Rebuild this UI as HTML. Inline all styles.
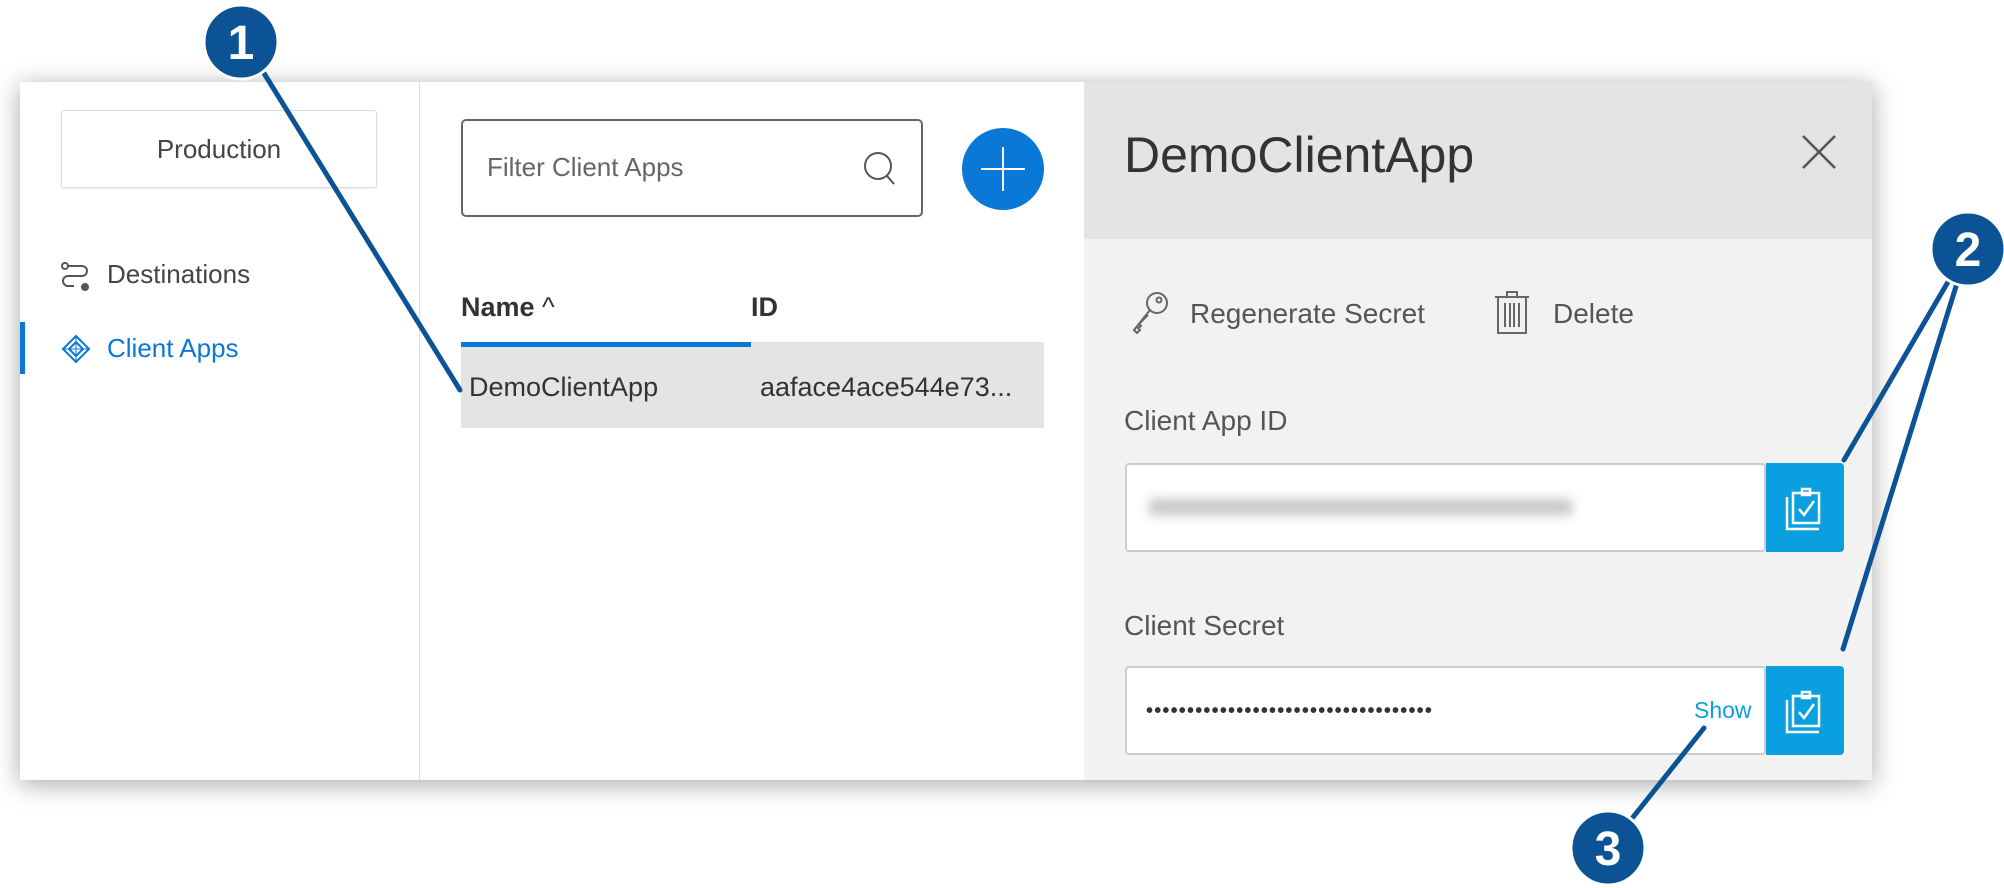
<!DOCTYPE html>
<html><head><meta charset="utf-8"><style>
*{margin:0;padding:0;box-sizing:border-box}
body{width:2004px;height:888px;background:#fff;position:relative;overflow:hidden;font-family:"Liberation Sans",sans-serif;color:#444}
.a{position:absolute}
.panel{left:20px;top:82px;width:1852px;height:698px;background:#fff;box-shadow:0 4px 24px rgba(0,0,0,.35)}
.t{position:absolute;white-space:nowrap}
</style></head><body>
<div class="a panel"></div>
<div class="a" style="left:419px;top:82px;width:1px;height:698px;background:#ddd"></div>
<div class="a" style="left:1084px;top:82px;width:788px;height:698px;background:#f2f2f2"></div>
<div class="a" style="left:1084px;top:82px;width:788px;height:157px;background:#e4e4e4"></div>

<!-- sidebar -->
<div class="a" style="left:61px;top:110px;width:316px;height:78px;border:1px solid #ddd;border-radius:3px;background:#fff;box-shadow:0 1px 2px rgba(0,0,0,.08)"></div>
<div class="t" style="left:61px;width:316px;text-align:center;top:134px;font-size:26px;color:#444">Production</div>
<svg class="a" style="left:60px;top:262px" width="32" height="30" viewBox="0 0 32 30" fill="none" stroke="#555" stroke-width="2"><circle cx="5" cy="4" r="3"/><path d="M8 4h14a5 5 0 0 1 0 10H8a5 5 0 0 0 0 10h6"/><circle cx="25" cy="25" r="3" fill="#555"/></svg>
<div class="t" style="left:107px;top:259px;font-size:26px;color:#444">Destinations</div>
<div class="a" style="left:20px;top:322px;width:5px;height:52px;background:#0a78d7"></div>
<svg class="a" style="left:61px;top:334px" width="30" height="30" viewBox="0 0 30 30" fill="none" stroke="#0a78d7" stroke-width="2"><path d="M15 2L28 15L15 28L2 15Z"/><path d="M8 15L15 8L22 15L15 22Z"/><path d="M2 15h26M15 2v26" stroke-width="1"/></svg>
<div class="t" style="left:107px;top:333px;font-size:26px;color:#0a78d7">Client Apps</div>

<!-- middle -->
<div class="a" style="left:461px;top:119px;width:462px;height:98px;border:2px solid #666;border-radius:5px;background:#fff"></div>
<div class="t" style="left:487px;top:152px;font-size:26px;color:#666">Filter Client Apps</div>
<svg class="a" style="left:862px;top:150px" width="36" height="38" viewBox="0 0 36 38" fill="none" stroke="#555" stroke-width="2"><circle cx="16" cy="16" r="13"/><path d="M25 26l7 8"/></svg>
<div class="a" style="left:962px;top:128px;width:82px;height:82px;border-radius:50%;background:#0a78d7"></div>
<div class="a" style="left:981px;top:168px;width:44px;height:2px;background:#fff"></div>
<div class="a" style="left:1002px;top:147px;width:2px;height:44px;background:#fff"></div>
<div class="t" style="left:461px;top:292px;font-size:27px;font-weight:bold;color:#333">Name <span style="font-weight:normal">^</span></div>
<div class="t" style="left:751px;top:292px;font-size:27px;font-weight:bold;color:#333">ID</div>
<div class="a" style="left:461px;top:342px;width:583px;height:86px;background:#e4e4e4"></div>
<div class="a" style="left:461px;top:342px;width:290px;height:5px;background:#0a78d7"></div>
<div class="t" style="left:469px;top:372px;font-size:27px;color:#333">DemoClientApp</div>
<div class="t" style="left:760px;top:372px;font-size:27px;color:#333">aaface4ace544e73...</div>

<!-- right -->
<div class="t" style="left:1124px;top:126px;font-size:50px;color:#333">DemoClientApp</div>
<svg class="a" style="left:1801px;top:134px" width="36" height="36" viewBox="0 0 36 36" stroke="#555" stroke-width="2.5"><path d="M2 2L34 34M34 2L2 34"/></svg>
<svg class="a" style="left:1130px;top:290px" width="40" height="46" viewBox="0 0 40 46" fill="none" stroke="#666" stroke-width="2"><circle cx="27" cy="13" r="10"/><circle cx="29" cy="10" r="2.5"/><path d="M20 20L4 40l3 3 3-3-2-2 3-2-2-2 3-3 6-6"/></svg>
<div class="t" style="left:1190px;top:298px;font-size:28px;color:#555">Regenerate Secret</div>
<svg class="a" style="left:1493px;top:290px" width="38" height="46" viewBox="0 0 38 46" fill="none" stroke="#666" stroke-width="2"><path d="M2 7h34M14 7V2h10v5M5 7v36h28V7M12 13v24M17 13v24M21 13v24M26 13v24"/></svg>
<div class="t" style="left:1553px;top:298px;font-size:28px;color:#555">Delete</div>
<div class="t" style="left:1124px;top:405px;font-size:28px;color:#555">Client App ID</div>
<div class="a" style="left:1125px;top:463px;width:641px;height:89px;border:2px solid #ccc;border-radius:4px;background:#fff"></div>
<div class="a" style="left:1148px;top:498px;width:425px;height:18px;background:#ccc;filter:blur(5px);border-radius:6px"></div>
<div class="a" style="left:1766px;top:463px;width:78px;height:89px;background:#0aa0e0;border-radius:0 4px 4px 0"></div>
<div class="t" style="left:1124px;top:610px;font-size:28px;color:#555">Client Secret</div>
<div class="a" style="left:1125px;top:666px;width:641px;height:89px;border:2px solid #ccc;border-radius:4px;background:#fff"></div>
<div class="t" style="left:1146px;top:700px;font-size:20px;letter-spacing:1.2px;color:#333;font-weight:bold">•••••••••••••••••••••••••••••••••••</div>
<div class="t" style="left:1694px;top:697px;font-size:23px;color:#0aa0e0">Show</div>
<div class="a" style="left:1766px;top:666px;width:78px;height:89px;background:#0aa0e0;border-radius:0 4px 4px 0"></div>
<svg class="a" style="left:1784px;top:487px" width="42" height="44" viewBox="0 0 42 44" fill="none" stroke="#fff" stroke-width="2.5"><path d="M3 10v32h32"/><path d="M9 6h26v30H9z"/><path d="M18 2h8v6h-8z"/><path d="M15 22l5 6 10-14"/></svg>
<svg class="a" style="left:1784px;top:690px" width="42" height="44" viewBox="0 0 42 44" fill="none" stroke="#fff" stroke-width="2.5"><path d="M3 10v32h32"/><path d="M9 6h26v30H9z"/><path d="M18 2h8v6h-8z"/><path d="M15 22l5 6 10-14"/></svg>

<!-- callouts -->
<svg class="a" style="left:0;top:0" width="2004" height="888" viewBox="0 0 2004 888">
<g stroke="#0b5394" stroke-width="5" stroke-linecap="round"><path d="M262 70L460 390"/><path d="M1952 275L1844 460"/><path d="M1958 280L1843 649"/><path d="M1626 826L1704 728"/></g>
<g fill="#0b5394" stroke="#fff" stroke-width="3"><circle cx="241" cy="42" r="37"/><circle cx="1968" cy="249" r="37"/><circle cx="1608" cy="848" r="37"/></g>
<g fill="#fff" font-family="Liberation Sans,sans-serif" font-weight="bold" font-size="48" text-anchor="middle"><text x="241" y="59">1</text><text x="1968" y="266">2</text><text x="1608" y="865">3</text></g>
</svg>
</body></html>
